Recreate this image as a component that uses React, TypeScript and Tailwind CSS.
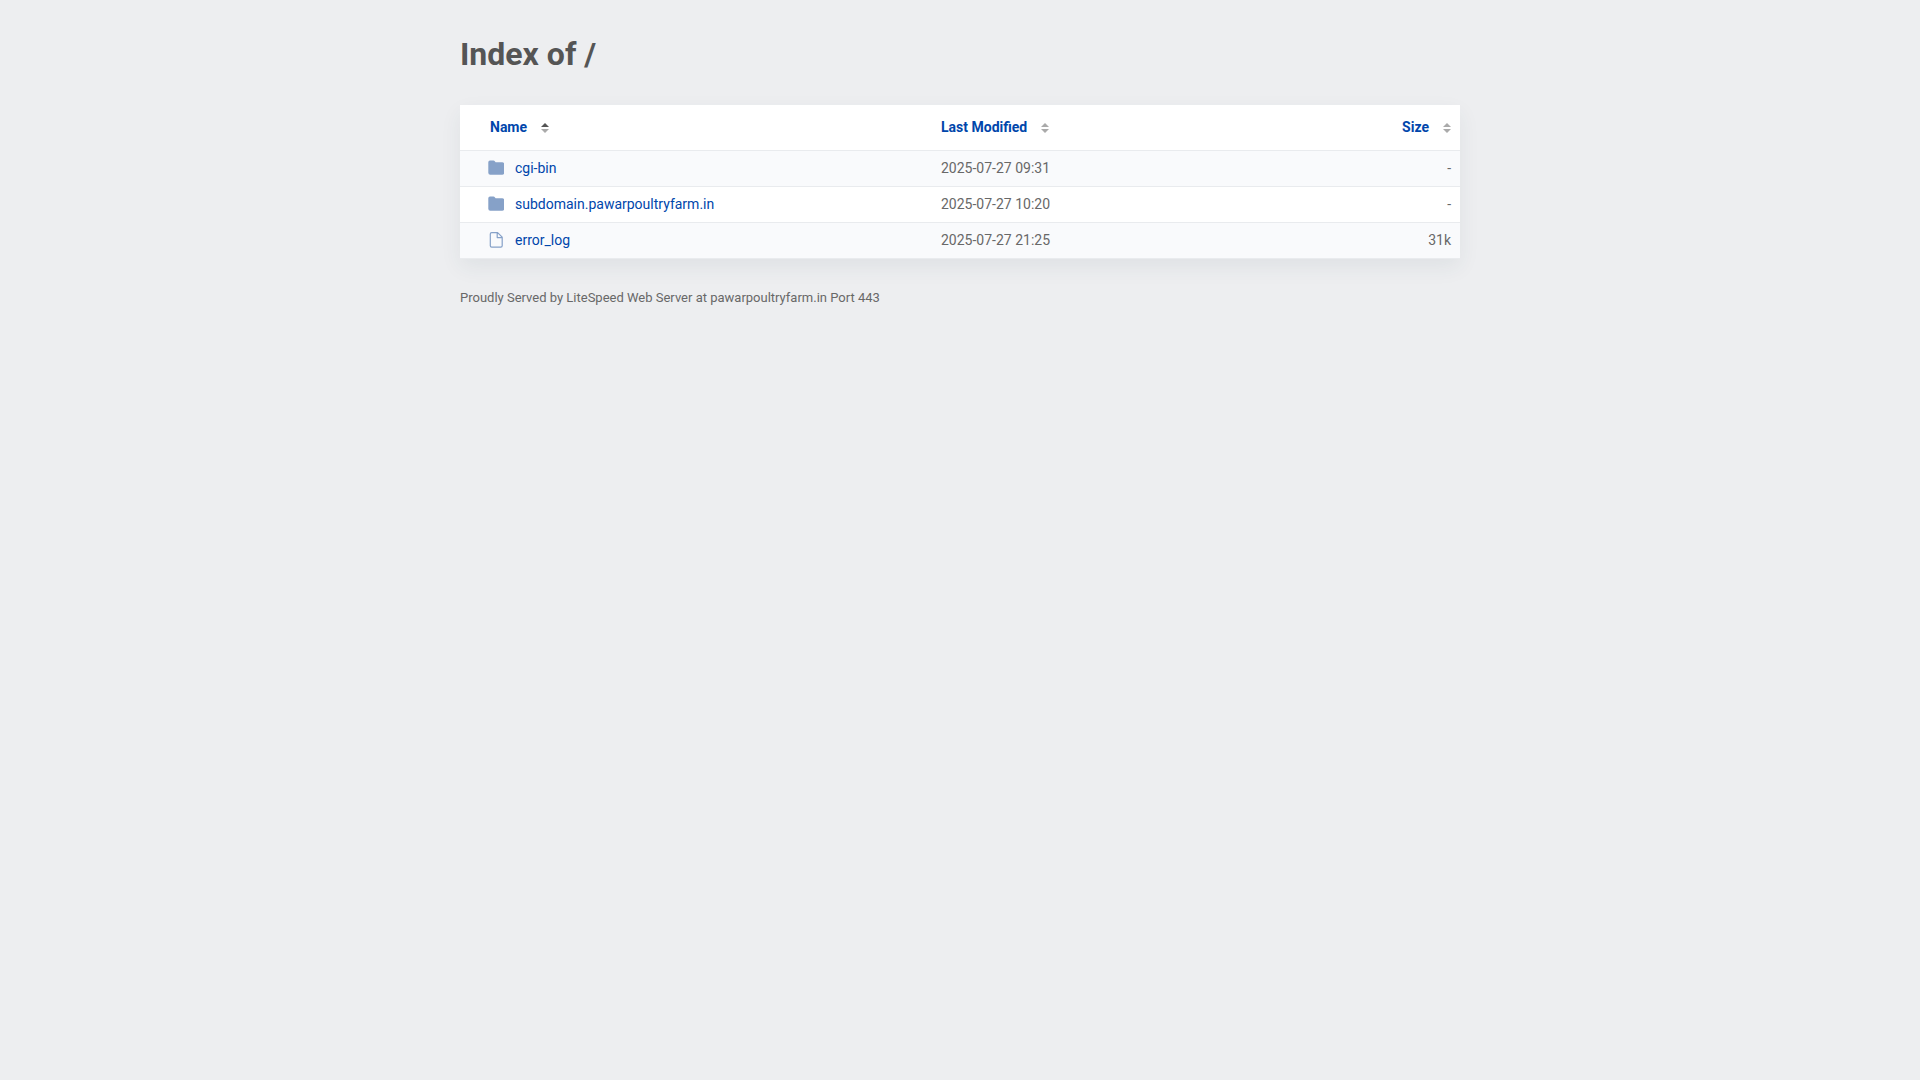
type Entry = { name: string; kind: 'folder' | 'file'; modified: string; size: string };

const entries: Entry[] = [
  { name: 'cgi-bin', kind: 'folder', modified: '2025-07-27 09:31', size: '-' },
  { name: 'subdomain.pawarpoultryfarm.in', kind: 'folder', modified: '2025-07-27 10:20', size: '-' },
  { name: 'error_log', kind: 'file', modified: '2025-07-27 21:25', size: '31k' },
];

function FolderIcon() {
  return (
    <svg className="size-4 shrink-0" viewBox="0 0 16 16" aria-hidden="true">
      <path
        fill="#86a1c8"
        d="M2 0.6H5.4Q6.4 0.6 7 1.4L7.6 2.2H14.2Q16.2 2.2 16.2 4.2V12.8Q16.2 14.8 14.2 14.8H2.3Q0.3 14.8 0.3 12.8V2.3Q0.3 0.6 2 0.6Z"
      />
    </svg>
  );
}

function FileIcon() {
  return (
    <svg className="size-4 shrink-0" viewBox="0 0 16 16" fill="none" stroke="#86a1c8" aria-hidden="true">
      <path
        strokeWidth="1.2"
        strokeLinejoin="round"
        d="M3.7 0.6H9.6L14.2 5.2V13.8Q14.2 15.2 12.8 15.2H3.7Q2.3 15.2 2.3 13.8V2Q2.3 0.6 3.7 0.6ZM9.2 0.8V5.6H14"
      />
    </svg>
  );
}

function SortIcon({ ascending = false }: { ascending?: boolean }) {
  return (
    <svg className="h-3 w-2" viewBox="0 0 8 12" aria-hidden="true">
      <path d="M0 6L4 2L8 6Z" fill={ascending ? '#555' : '#aaa'} />
      <path d="M0 8L4 12L8 8Z" fill="#aaa" />
    </svg>
  );
}

function SortButton({ label, ascending }: { label: string; ascending?: boolean }) {
  return (
    <button type="button" className="inline-flex cursor-pointer items-center gap-3.5 font-bold text-[#0046ab]">
      {label}
      <SortIcon ascending={ascending} />
    </button>
  );
}

export default function App() {
  return (
    <div className="min-h-screen bg-[#edeef0] px-6 py-8 font-[Roboto,sans-serif] text-sm text-[#555]">
      <main className="mx-auto max-w-[1000px]">
        <h1 className="mb-[29px] text-[32px] leading-11 font-bold">Index of /</h1>
        <table className="w-full border-collapse bg-white shadow-[0_8px_20px_rgba(38,70,80,0.07)]">
          <thead>
            <tr className="h-[45px] border-b border-[#e9ebee] text-left">
              <th scope="col" className="w-[47%] pl-[30px]">
                <SortButton label="Name" ascending />
              </th>
              <th scope="col" className="pl-[11px]">
                <SortButton label="Last Modified" />
              </th>
              <th scope="col" className="pr-[9px] text-right">
                <SortButton label="Size" />
              </th>
            </tr>
          </thead>
          <tbody>
            {entries.map((entry) => (
              <tr key={entry.name} className="h-9 border-b border-[#e9ebee] odd:bg-[#f9fafc]">
                <td className="pt-0.5 pl-7">
                  <a href="#" className="inline-flex items-center gap-[11px] text-[#0046ab]">
                    {entry.kind === 'folder' ? <FolderIcon /> : <FileIcon />}
                    {entry.name}
                  </a>
                </td>
                <td className="pl-[11px] text-[#686868]">{entry.modified}</td>
                <td className="pr-[9px] text-right text-[#686868]">{entry.size}</td>
              </tr>
            ))}
          </tbody>
        </table>
        <footer className="pt-[29px] text-[13px] leading-5 text-[#686868]">
          Proudly Served by LiteSpeed Web Server at pawarpoultryfarm.in Port 443
        </footer>
      </main>
    </div>
  );
}
